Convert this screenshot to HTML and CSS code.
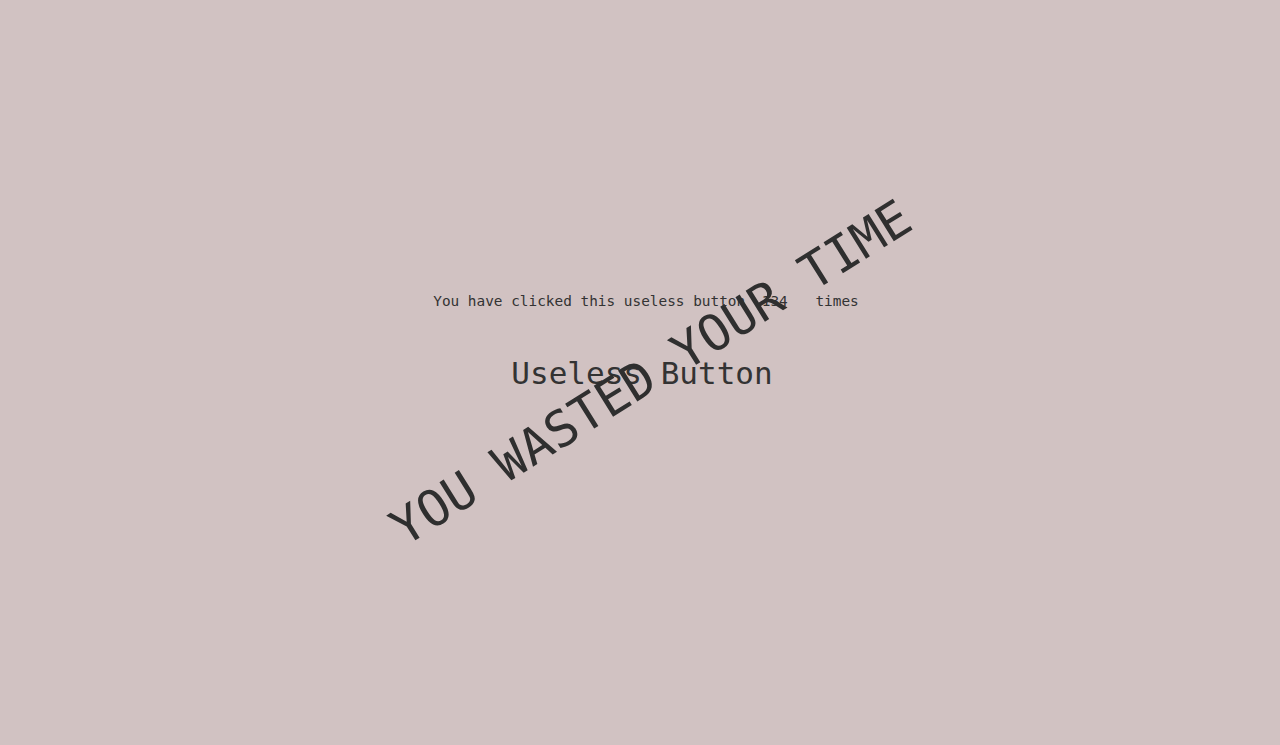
FILE: index.html
```html
<!DOCTYPE html>
<html lang="en">
<head>
<meta charset="utf-8">
<title>Useless Button</title>
<link rel="stylesheet" href="styles.css">
</head>
<body>
<main class="page">
  <p class="counter">You have clicked this useless button <span class="count">134</span> times</p>
  <button class="useless" type="button">Useless Button</button>
  <div class="banner">YOU WASTED YOUR TIME</div>
</main>
</body>
</html>
```
FILE: styles.css
```css
* { box-sizing: border-box; }
html, body {
  margin: 0;
  padding: 0;
  background: #d1c2c2;
}
body {
  font-family: "DejaVu Sans Mono", "Liberation Mono", monospace;
  color: #333333;
}
.page {
  position: relative;
  height: 745px;
  display: flex;
  flex-direction: column;
  align-items: center;
  justify-content: center;
  gap: 45px;
  padding-bottom: 61px;
  overflow: hidden;
}
.counter {
  margin: 0;
  padding-left: 12px;
  font-size: 14.4px;
  line-height: 17px;
  white-space: pre;
}
.count {
  display: inline-block;
  padding: 0 19px 0 8px;
}
.useless {
  font-family: inherit;
  font-size: 31px;
  line-height: 37px;
  color: #333333;
  background: none;
  border: none;
  padding: 0 0 0 4px;
  margin: 0;
}
.banner {
  position: absolute;
  left: calc(50% + 11px);
  top: 50%;
  font-size: 50px;
  line-height: 1;
  white-space: nowrap;
  color: #2f2f2f;
  transform: translate(-50%, -50%) rotate(-32deg);
  pointer-events: none;
}
```
